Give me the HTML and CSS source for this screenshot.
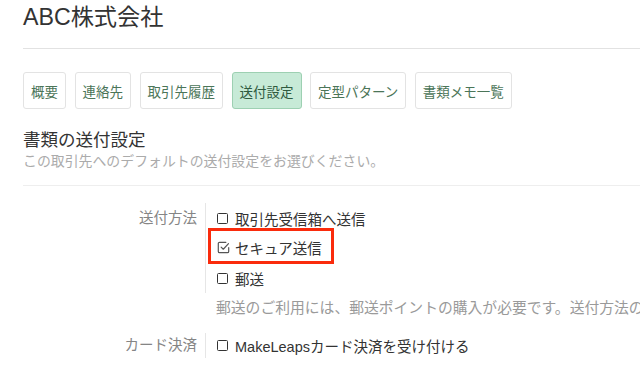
FILE: index.html
```html
<!DOCTYPE html>
<html lang="ja">
<head>
    <meta charset="UTF-8">
    <meta name="viewport" content="width=device-width, initial-scale=1.0">
    <title>ABC株式会社 - 送付設定</title>
    <link rel="stylesheet" href="styles.css">
</head>
<body>

<div class="page">
    <h1 class="title">ABC株式会社</h1>

    <!-- タブ -->
    <div class="tabs">
        <span class="tab">概要</span>
        <span class="tab">連絡先</span>
        <span class="tab">取引先履歴</span>
        <span class="tab active">送付設定</span>
        <span class="tab">定型パターン</span>
        <span class="tab">書類メモ一覧</span>
    </div>

    <h2 class="secTitle">書類の送付設定</h2>
    <p class="secDesc">この取引先へのデフォルトの送付設定をお選びください。</p>

    <div class="formRow">
        <div class="label">送付方法</div>
        <div class="fieldWrap">
            <div class="field">
                <div class="opt"><span class="box"></span>取引先受信箱へ送信</div>
                <div class="opt"><span class="mark">
                    <span class="checked">
                        <svg width="12" height="12" viewBox="0 0 12 12">
                            <path d="M8.2 1.2 H2.4 A1.2 1.2 0 0 0 1.2 2.4 V9.6 A1.2 1.2 0 0 0 2.4 10.8 H9.6 A1.2 1.2 0 0 0 10.8 9.6 V6.2" fill="none" stroke="#555" stroke-width="1.1" stroke-linecap="round"/>
                            <path d="M3.8 5.6 L5.8 7.6 L10.6 2.4" fill="none" stroke="#555" stroke-width="1.1" stroke-linecap="round" stroke-linejoin="round"/>
                        </svg>
                    </span>セキュア送信</span></div>
                <div class="opt"><span class="box"></span>郵送</div>
            </div>
            <div class="help">郵送のご利用には、郵送ポイントの購入が必要です。送付方法の</div>
        </div>
    </div>

    <div class="formRow card">
        <div class="label">カード決済</div>
        <div class="fieldWrap">
            <div class="field">
                <div class="opt"><span class="box"></span>MakeLeapsカード決済を受け付ける</div>
            </div>
        </div>
    </div>
</div>

</body>
</html>
```

FILE: styles.css
```css
* {
    box-sizing: border-box;
}

body {
    margin: 0;
    background: #fff;
    color: #333;
    font-family: "Liberation Sans", "Noto Sans CJK JP", sans-serif;
    overflow: hidden;
}

.page {
    padding-left: 23px;
    width: 640px;
}

.title {
    margin: 0;
    padding: 3px 0 17px;
    font-size: 23.2px;
    line-height: 28px;
    font-weight: normal;
    color: #333;
    border-bottom: 1px solid #e2e2e2;
}

.tabs {
    display: flex;
    gap: 8.5px;
    margin-top: 23px;
}

.tab {
    display: inline-flex;
    align-items: center;
    height: 37px;
    padding: 0 7px;
    border: 1px solid #e3e3e3;
    border-radius: 3px;
    font-size: 13.5px;
    color: #4b7558;
    white-space: nowrap;
}

.tab.active {
    background-color: #c7ead7;
    border-color: #9dd0b2;
    color: #2f5a3f;
}

.secTitle {
    margin: 20px 0 0;
    font-size: 17.5px;
    line-height: 22px;
    font-weight: normal;
    color: #333;
}

.secDesc {
    margin: 0;
    padding-bottom: 14px;
    font-size: 13.9px;
    line-height: 20px;
    color: #ababab;
    border-bottom: 1px solid #eeeeee;
    white-space: nowrap;
}

.formRow {
    display: flex;
    margin-top: 17px;
    font-size: 14.5px;
}

.formRow.card {
    margin-top: 10px;
}

.label {
    width: 174px;
    margin-right: 8px;
    text-align: right;
    color: #858585;
    line-height: 30px;
    flex-shrink: 0;
}

.card .label {
    line-height: 25px;
}

.field {
    border-left: 1px solid #e6e6e6;
    padding-left: 11px;
}

.opt {
    display: flex;
    align-items: center;
    height: 30px;
    white-space: nowrap;
}

.card .opt {
    height: 25px;
}

.box {
    display: inline-block;
    width: 11px;
    height: 11px;
    border: 1.4px solid #333;
    border-radius: 1.5px;
    margin-right: 7px;
}

/* 赤枠で強調 */
.mark {
    display: inline-flex;
    align-items: center;
    height: 18px;
    padding: 2px 3px 0 0;
    margin-bottom: 4px;
    outline: 3px solid #fa2b0c;
    outline-offset: 6px;
}

.checked {
    display: inline-flex;
    width: 13px;
    height: 13px;
    margin-right: 5px;
}

.checked svg {
    width: 13px;
    height: 13px;
}

.help {
    padding-left: 11px;
    line-height: 30px;
    font-size: 14.8px;
    color: #9a9a9a;
    white-space: nowrap;
}
```
